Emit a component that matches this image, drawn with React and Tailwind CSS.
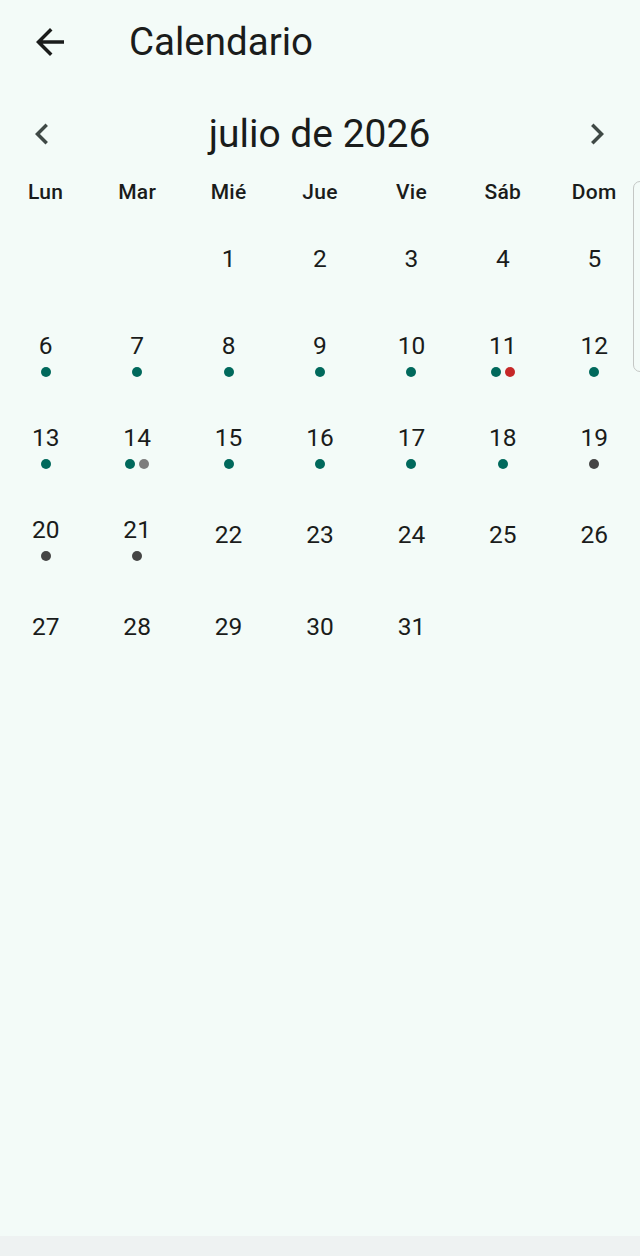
import React from "react";

const TEAL = "bg-[#00695c]";
const RED = "bg-[#c62828]";
const LGRAY = "bg-[#7d7d7d]";
const DGRAY = "bg-[#454545]";

const dots = {
  6: [TEAL], 7: [TEAL], 8: [TEAL], 9: [TEAL], 10: [TEAL], 11: [TEAL, RED], 12: [TEAL],
  13: [TEAL], 14: [TEAL, LGRAY], 15: [TEAL], 16: [TEAL], 17: [TEAL], 18: [TEAL], 19: [DGRAY],
  20: [DGRAY], 21: [DGRAY],
};

const weekdays = ["Lun", "Mar", "Mié", "Jue", "Vie", "Sáb", "Dom"];

function DayCell({ day }) {
  if (!day) return <div className="h-[92px]" />;
  const d = dots[day];
  return (
    <div className="h-[92px] flex flex-col items-center justify-center">
      {d ? (
        <div className="flex flex-col items-center pt-[7px]">
          <div className="h-[28px] leading-[28px] text-[24.5px] text-[#1a1c1b]">{day}</div>
          <div className="mt-[7px] flex gap-[4px] h-[10px]">
            {d.map((c, i) => (
              <span key={i} className={`block w-[10px] h-[10px] rounded-full ${c}`} />
            ))}
          </div>
        </div>
      ) : (
        <div className="h-[28px] leading-[28px] text-[24.5px] text-[#1a1c1b]">{day}</div>
      )}
    </div>
  );
}

export default function App() {
  const cells = [null, null];
  for (let i = 1; i <= 31; i++) cells.push(i);
  return (
    <div className="relative min-h-[1256px] flex flex-col bg-[#f3fbf8] font-['Roboto',sans-serif] overflow-hidden">
      <div className="flex-1">
        <div className="h-[84px] flex items-center">
          <div className="ml-[29px] w-[42px] h-[42px] flex items-center justify-center">
            <svg viewBox="0 0 24 24" className="w-[42px] h-[42px]" fill="#1a1c1b">
              <path d="M20 11H7.83l5.59-5.59L12 4l-8 8 8 8 1.41-1.41L7.83 13H20v-2z" />
            </svg>
          </div>
          <div className="ml-[58px] text-[38.5px] leading-none text-[#1a1c1b]">Calendario</div>
        </div>

        <div className="mt-[22px] h-[56px] flex items-center justify-between pl-[21px] pr-[22px]">
          <svg viewBox="0 0 24 24" className="w-[42px] h-[42px]" fill="#3f4946">
            <path d="M15.41 7.41L14 6l-6 6 6 6 1.41-1.41L10.83 12z" />
          </svg>
          <div className="text-[39px] leading-none text-[#1a1c1b]">julio de 2026</div>
          <svg viewBox="0 0 24 24" className="w-[42px] h-[42px]" fill="#3f4946">
            <path d="M10 6L8.59 7.41 13.17 12l-4.58 4.59L10 18l6-6z" />
          </svg>
        </div>

        <div className="mt-[15px] h-[30px] grid grid-cols-7 items-center">
          {weekdays.map((w) => (
            <div key={w} className="text-center text-[21px] font-medium tracking-[0.3px] text-[#1a1c1b]">
              {w}
            </div>
          ))}
        </div>

        <div className="mt-[6px] grid grid-cols-7">
          {cells.map((d, i) => (
            <DayCell key={i} day={d} />
          ))}
        </div>
      </div>
      <div className="h-[20px] bg-[#eef2f2]" />

      <div className="absolute left-[633px] top-[181px] w-[20px] h-[191px] rounded-[7px] border border-[#c4c7c5]" />
    </div>
  );
}
